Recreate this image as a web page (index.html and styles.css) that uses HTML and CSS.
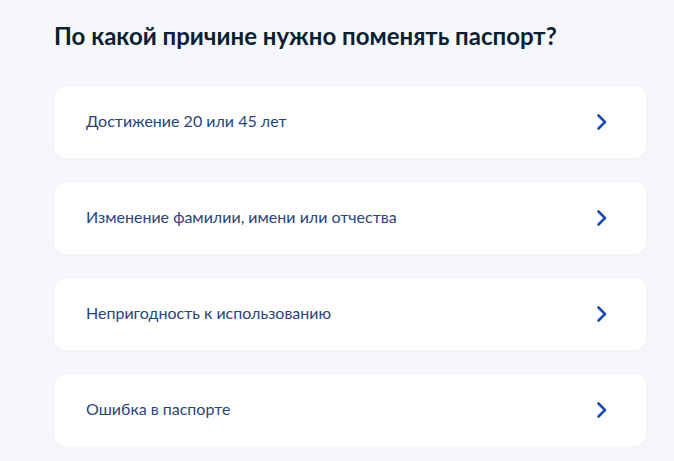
FILE: index.html
```html
<!DOCTYPE html>
<html lang="ru">
<head>
<meta charset="utf-8">
<link rel="stylesheet" href="styles.css">
</head>
<body>
<main class="page">
  <h1 class="title">По какой причине нужно поменять паспорт?</h1>
  <div class="list">
    <a class="card" href="#"><span class="card-text">Достижение 20 или 45 лет</span><svg class="chev" viewBox="0 0 12 18" width="12" height="18"><path d="M2.5 2.5 L9 9 L2.5 15.5" fill="none" stroke="#1a4bb0" stroke-width="2.6" stroke-linecap="round" stroke-linejoin="round"/></svg></a>
    <a class="card" href="#"><span class="card-text">Изменение фамилии, имени или отчества</span><svg class="chev" viewBox="0 0 12 18" width="12" height="18"><path d="M2.5 2.5 L9 9 L2.5 15.5" fill="none" stroke="#1a4bb0" stroke-width="2.6" stroke-linecap="round" stroke-linejoin="round"/></svg></a>
    <a class="card" href="#"><span class="card-text">Непригодность к использованию</span><svg class="chev" viewBox="0 0 12 18" width="12" height="18"><path d="M2.5 2.5 L9 9 L2.5 15.5" fill="none" stroke="#1a4bb0" stroke-width="2.6" stroke-linecap="round" stroke-linejoin="round"/></svg></a>
    <a class="card" href="#"><span class="card-text">Ошибка в паспорте</span><svg class="chev" viewBox="0 0 12 18" width="12" height="18"><path d="M2.5 2.5 L9 9 L2.5 15.5" fill="none" stroke="#1a4bb0" stroke-width="2.6" stroke-linecap="round" stroke-linejoin="round"/></svg></a>
  </div>
</main>
</body>
</html>
```
FILE: styles.css
```css
html, body {
  margin: 0;
  padding: 0;
  background: #f5f7fa;
}
body {
  font-family: Lato, "Noto Sans", sans-serif;
}
.page {
  width: 592px;
  padding: 20px 0 0 54px;
}
.title {
  margin: 0 0 34px;
  font-size: 24px;
  line-height: 32px;
  font-weight: 700;
  color: #0b1f33;
}
.list {
  display: flex;
  flex-direction: column;
  gap: 24px;
}
.card {
  display: flex;
  align-items: center;
  justify-content: space-between;
  height: 72px;
  padding: 0 38px 0 32px;
  background: #fff;
  border-radius: 12px;
  box-shadow: 0 1px 4px rgba(40, 60, 110, 0.05);
  text-decoration: none;
}
.card-text {
  font-size: 16px;
  line-height: 20px;
  padding-bottom: 3px;
  color: #2a4479;
}
.chev {
  display: block;
}
```
